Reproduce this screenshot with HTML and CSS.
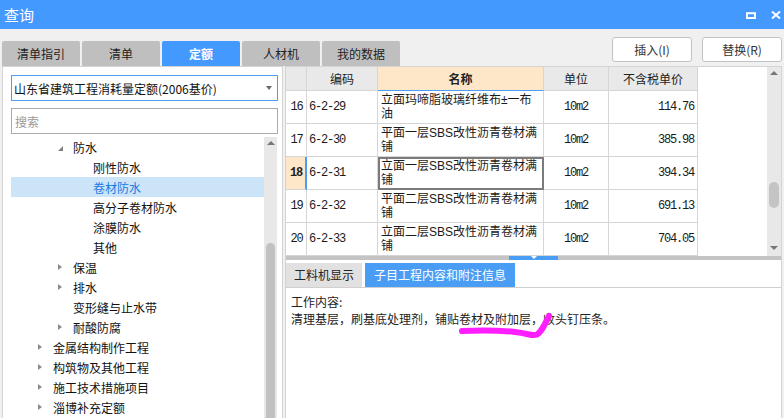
FILE: index.html
```html
<!DOCTYPE html>
<html lang="zh">
<head>
<meta charset="utf-8">
<title>查询</title>
<link rel="stylesheet" href="styles.css">
</head>
<body>
<div class="window">
  <div class="titlebar">
    <span class="title">查询</span>
    <div class="win-ctrls">
      <svg class="ic" width="10" height="7" viewBox="0 0 10 7"><rect x="1" y="1.2" width="8" height="4.8" fill="none" stroke="#fff" stroke-width="2"/></svg>
      <svg class="ic" width="10" height="8" viewBox="0 0 10 8"><path d="M1 0.5 L9 7.5 M9 0.5 L1 7.5" stroke="#fff" stroke-width="2" fill="none"/></svg>
    </div>
  </div>

  <div class="toolbar">
    <div class="tabs">
      <div class="tab">清单指引</div>
      <div class="tab">清单</div>
      <div class="tab active">定额</div>
      <div class="tab">人材机</div>
      <div class="tab">我的数据</div>
    </div>
    <div class="buttons">
      <div class="btn">插入(I)</div>
      <div class="btn">替换(R)</div>
    </div>
  </div>

  <div class="main">
    <div class="left">
      <div class="select"><span>山东省建筑工程消耗量定额(2006基价)</span><span class="caret"></span></div>
      <div class="search">搜索</div>
      <div class="tree-wrap">
        <div class="tree">
          <div class="node l2"><span class="arr open"></span>防水</div>
          <div class="node l3">刚性防水</div>
          <div class="node l3 sel">卷材防水</div>
          <div class="node l3">高分子卷材防水</div>
          <div class="node l3">涂膜防水</div>
          <div class="node l3">其他</div>
          <div class="node l2"><span class="arr"></span>保温</div>
          <div class="node l2"><span class="arr"></span>排水</div>
          <div class="node l2"><span class="arr none"></span>变形缝与止水带</div>
          <div class="node l2"><span class="arr"></span>耐酸防腐</div>
          <div class="node l1"><span class="arr"></span>金属结构制作工程</div>
          <div class="node l1"><span class="arr"></span>构筑物及其他工程</div>
          <div class="node l1"><span class="arr"></span>施工技术措施项目</div>
          <div class="node l1"><span class="arr"></span>淄博补充定额</div>
        </div>
        <div class="vscroll">
          <span class="sb-up"></span>
          <span class="sb-thumb"></span>
        </div>
      </div>
    </div>

    <div class="right">
      <div class="grid-area">
        <div class="grid">
          <div class="grow head">
            <div class="c"></div>
            <div class="c">编码</div>
            <div class="c name-h">名称</div>
            <div class="c">单位</div>
            <div class="c">不含税单价</div>
          </div>
          <div class="grow">
            <div class="c num mono">16</div>
            <div class="c code mono">6-2-29</div>
            <div class="c name"><span class="ln">立面玛啼脂玻璃纤维布±一布</span><span class="ln">油</span></div>
            <div class="c unit mono">10m2</div>
            <div class="c price mono">114.76</div>
          </div>
          <div class="grow">
            <div class="c num mono">17</div>
            <div class="c code mono">6-2-30</div>
            <div class="c name"><span class="ln">平面一层SBS改性沥青卷材满</span><span class="ln">铺</span></div>
            <div class="c unit mono">10m2</div>
            <div class="c price mono">385.98</div>
          </div>
          <div class="grow cur">
            <div class="c num mono">18</div>
            <div class="c code mono">6-2-31</div>
            <div class="c name focus"><span class="ln">立面一层SBS改性沥青卷材满</span><span class="ln">铺</span></div>
            <div class="c unit mono">10m2</div>
            <div class="c price mono">394.34</div>
          </div>
          <div class="grow">
            <div class="c num mono">19</div>
            <div class="c code mono">6-2-32</div>
            <div class="c name"><span class="ln">平面二层SBS改性沥青卷材满</span><span class="ln">铺</span></div>
            <div class="c unit mono">10m2</div>
            <div class="c price mono">691.13</div>
          </div>
          <div class="grow">
            <div class="c num mono">20</div>
            <div class="c code mono">6-2-33</div>
            <div class="c name"><span class="ln">立面二层SBS改性沥青卷材满</span><span class="ln">铺</span></div>
            <div class="c unit mono">10m2</div>
            <div class="c price mono">704.05</div>
          </div>
        </div>
        <div class="vscroll2">
          <span class="sb-up2"></span>
          <span class="sb-thumb2"></span>
          <span class="sb-fill"></span>
          <span class="sb-down2"></span>
        </div>
      </div>
      <div class="splitter"><span class="handle"><span class="hdown"></span></span></div>
      <div class="bottom">
        <div class="btabs">
          <div class="btab">工料机显示</div>
          <div class="btab active">子目工程内容和附注信息</div>
        </div>
        <div class="info">
          <p>工作内容:</p>
          <p>清理基层，刷基底处理剂，铺贴卷材及附加层，收头钉压条。</p>
          <svg class="scribble" width="495" height="130" viewBox="0 0 495 130"><path d="M176 43 C195 42 215 42.5 229 44 S246 48.5 251 46.5 C255 44.5 258 38 263 28" fill="none" stroke="#ff1eff" stroke-width="6" stroke-linecap="round" stroke-linejoin="round"/></svg>
        </div>
      </div>
    </div>
  </div>
</div>
</body>
</html>
```

FILE: styles.css
```css
* { box-sizing: border-box; margin: 0; padding: 0; }
html, body { width: 784px; height: 418px; overflow: hidden; }
body {
  font-family: "Noto Sans CJK SC", "Noto Sans", sans-serif;
  font-size: 12px;
  color: #222;
  background: #f0f0f0;
}
.window { display: flex; flex-direction: column; height: 418px; }

/* title bar */
.titlebar {
  height: 29px;
  background: #4499ff;
  color: #fff;
  display: flex;
  align-items: center;
  justify-content: space-between;
  padding: 0 3px 0 4px;
}
.title { font-size: 15px; line-height: 29px; }
.win-ctrls { display: flex; align-items: center; gap: 15px; padding-top: 1px; }
.ic { display: block; }

/* toolbar */
.toolbar {
  height: 37px;
  display: flex;
  justify-content: space-between;
  padding: 0 2px;
}
.tabs { display: flex; gap: 2px; align-self: flex-end; }
.tab {
  width: 78px;
  height: 25px;
  background: #bfbfbf;
  border-radius: 2px 2px 0 0;
  display: flex;
  align-items: center;
  justify-content: center;
  color: #222;
  line-height: 1;
}
.tab.active { background: #4499ff; color: #fff; font-weight: bold; }
.buttons { display: flex; gap: 10px; margin-top: 8px; align-self: flex-start; }
.btn {
  width: 80px;
  height: 25px;
  background: #fff;
  border: 1px solid #c3c3c3;
  border-radius: 3px;
  display: flex;
  align-items: center;
  justify-content: center;
  color: #333;
}

/* main */
.main {
  flex: 1;
  min-height: 0;
  display: flex;
  gap: 2px;
  padding: 0 2px;
}
.left {
  width: 281px;
  background: #fff;
  border: 1px solid #d4d4d4;
  border-bottom: none;
  padding: 8px 4px 0 8px;
  display: flex;
  flex-direction: column;
}
.select {
  height: 26px;
  flex: none;
  border: 1px solid #4a9df2;
  display: flex;
  align-items: center;
  justify-content: space-between;
  padding: 0 5px 0 2px;
  color: #111;
}
.caret {
  width: 0; height: 0;
  border-left: 3px solid transparent;
  border-right: 3px solid transparent;
  border-top: 4px solid #6a6a6a;
}
.search {
  height: 26px;
  flex: none;
  margin-top: 7px;
  border: 1px solid #ababab;
  display: flex;
  align-items: center;
  padding-left: 3px;
  color: #9a9a9a;
}
.tree-wrap {
  flex: 1;
  min-height: 0;
  margin-top: 3px;
  display: flex;
  overflow: hidden;
}
.tree { flex: 1; }
.node {
  height: 20px;
  display: flex;
  align-items: center;
  color: #111;
  white-space: nowrap;
}
.node.l1 { padding-left: 27px; }
.node.l2 { padding-left: 47px; }
.node.l3 { padding-left: 82px; }
.node.sel { background: #cce4f8; color: #1a7ae4; }
.arr { width: 15px; flex: none; display: flex; align-items: center; }
.arr::before {
  content: "";
  width: 0; height: 0;
  border-top: 3.5px solid transparent;
  border-bottom: 3.5px solid transparent;
  border-left: 4px solid #8c8c8c;
}
.arr.open::before {
  border-top: none;
  border-left: 5px solid transparent;
  border-bottom: 5px solid #7e7e7e;
  margin-top: 3px;
}
.arr.none::before { display: none; }

.vscroll {
  width: 13px;
  margin-right: 1px;
  background: #e8e8e8;
  display: flex;
  flex-direction: column;
  align-items: center;
}
.sb-up {
  height: 12px;
  display: flex;
  align-items: center;
}
.sb-up::before, .sb-up2::before {
  content: "";
  width: 0; height: 0;
  border-left: 4px solid transparent;
  border-right: 4px solid transparent;
  border-bottom: 4px solid #767676;
}
.sb-thumb {
  width: 9px;
  flex: 1;
  margin-top: 94px;
  background: #c1c1c1;
  border-radius: 5px 5px 0 0;
}

/* right */
.right {
  flex: 1;
  min-width: 0;
  border: 1px solid #d4d4d4;
  border-bottom: none;
  display: flex;
  flex-direction: column;
  background: #fff;
}
.grid-area { height: 189px; display: flex; flex: none; }
.grid { flex: 1; background: #fff; }
.grow {
  display: grid;
  grid-template-columns: 21px 71px 166px 65px 89px;
  height: 33px;
}
.grow.head { height: 24px; }
.c {
  border-right: 1px solid #d6d6d6;
  border-bottom: 1px solid #d6d6d6;
  display: flex;
  align-items: center;
  color: #1a1a1a;
}
.head .c { background: #e9e9e9; justify-content: center; color: #222; }
.head .c.name-h {
  background: #fee6c9;
  font-weight: bold;
  border-bottom-color: #4a9df2;
}
.mono {
  font-family: "Liberation Mono", "DejaVu Sans Mono", monospace;
  font-size: 12px;
  letter-spacing: -1.2px;
}
.num { justify-content: center; padding-left: 1px; }
.code { padding-left: 2px; }
.name {
  padding-left: 3px;
  flex-direction: column;
  align-items: flex-start;
  justify-content: center;
  font-family: "Liberation Sans", "Noto Sans CJK SC", sans-serif;
}
.ln { display: block; height: 14px; line-height: 14px; white-space: nowrap; }
.unit { justify-content: center; }
.price { justify-content: flex-end; padding-right: 3px; }
.cur .num {
  background: #fee6c9;
  font-weight: bold;
  color: #222;
  border-right: 2px solid #4a9df2;
}
.name.focus { outline: 2px solid #7b7b7b; outline-offset: -2px; }

.vscroll2 {
  width: 14px;
  background: #e8e8e8;
  display: flex;
  flex-direction: column;
  align-items: center;
}
.sb-up2 { height: 12px; display: flex; align-items: center; }
.sb-thumb2 {
  width: 10px;
  height: 26px;
  margin-top: 103px;
  background: #c4c4c4;
  border-radius: 5px;
}
.sb-fill { flex: 1; }
.sb-down2 { height: 16px; display: flex; align-items: center; }
.sb-down2::before {
  content: "";
  width: 0; height: 0;
  border-left: 4px solid transparent;
  border-right: 4px solid transparent;
  border-top: 4px solid #767676;
}

.splitter {
  height: 4px;
  flex: none;
  background: #c4c4c4;
  display: flex;
  justify-content: center;
}
.handle {
  width: 49px;
  background: #4a9df5;
  display: flex;
  justify-content: center;
}
.hdown {
  width: 0; height: 0;
  border-left: 3px solid transparent;
  border-right: 3px solid transparent;
  border-top: 3px solid #fff;
}

.bottom {
  flex: 1;
  display: flex;
  flex-direction: column;
  padding-top: 3px;
  background: #fff;
}
.btabs { display: flex; gap: 3px; height: 24px; flex: none; }
.btab {
  width: 76px;
  background: #e1e1e1;
  line-height: 24px;
  padding-left: 8px;
  color: #222;
}
.btab.active { width: 150px; background: #4a9df5; color: #fff; padding-left: 9px; }
.info {
  flex: 1;
  position: relative;
  border-top: 1px solid #d0d0d0;
  padding: 5px 5px;
  line-height: 17px;
  color: #222;
}
.scribble { position: absolute; left: 0; top: 0; pointer-events: none; }
```
